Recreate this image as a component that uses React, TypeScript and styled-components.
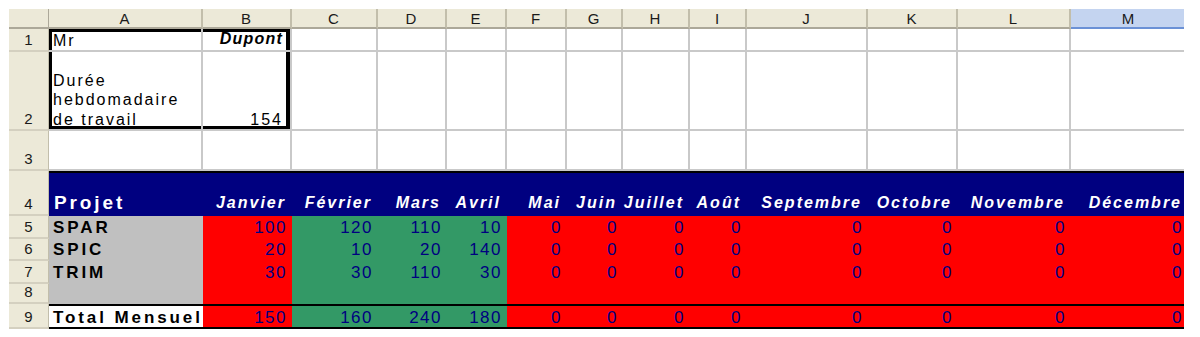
import React from 'react';
import styled, { createGlobalStyle } from 'styled-components';

const GlobalStyle = createGlobalStyle`
    html, body {
        margin: 0;
        padding: 0;
        background: #fff;
    }
    body {
        font-family: "Liberation Sans", Arial, sans-serif;
        color: #000;
    }
`;

// largeurs des colonnes A..M
const COL_WIDTHS = [154, 89, 86, 69, 60, 60, 56, 67, 57, 121, 90, 113, 117];
const COL_NAMES = 'ABCDEFGHIJKLM'.split('');
const SELECTED_COL = 'M';

const MONTHS = [
    'Janvier', 'Février', 'Mars', 'Avril', 'Mai', 'Juin',
    'Juillet', 'Août', 'Septembre', 'Octobre', 'Novembre', 'Décembre'
];

const PROJECTS = [
    { name: 'SPAR', values: [100, 120, 110, 10, 0, 0, 0, 0, 0, 0, 0, 0] },
    { name: 'SPIC', values: [20, 10, 20, 140, 0, 0, 0, 0, 0, 0, 0, 0] },
    { name: 'TRIM', values: [30, 30, 110, 30, 0, 0, 0, 0, 0, 0, 0, 0] },
];

const ROW_HEIGHTS = [23, 22, 23];

// Février à Avril en vert, le reste en rouge
const monthFill = (i: number) => (i >= 1 && i <= 3 ? '#339966' : '#FF0000');

const GRID = '#C9C9C9';

const Sheet = styled.div`
    margin: 9px 0 0 9px;
    width: 1175px;
    overflow: hidden;
    display: flex;
    flex-direction: column;
`;

const Row = styled.div<{ $h: number }>`
    display: flex;
    flex: none;
    height: ${({ $h }) => $h}px;
`;

const Corner = styled.div`
    flex: none;
    width: 40px;
    box-sizing: border-box;
    background: #ECE9D8;
    border-right: 1px solid #ACA899;
    border-bottom: 2px solid #ACA899;
`;

const ColHead = styled.div<{ $w: number; $selected?: boolean }>`
    flex: none;
    width: ${({ $w }) => $w}px;
    box-sizing: border-box;
    display: flex;
    align-items: center;
    justify-content: center;
    background: ${({ $selected }) => ($selected ? '#C4D4F0' : '#ECE9D8')};
    border-right: 2px solid ${({ $selected }) => ($selected ? '#C4D4F0' : '#C2BEAB')};
    border-bottom: 2px solid ${({ $selected }) => ($selected ? '#6B91D6' : '#ACA899')};
    font-size: 15px;
    letter-spacing: 1px;
    color: #1a1a1a;
    padding-top: 1px;
`;

const RowHead = styled.div`
    flex: none;
    width: 40px;
    box-sizing: border-box;
    display: flex;
    align-items: flex-end;
    justify-content: center;
    background: #ECE9D8;
    border-right: 1px solid #C2BEAB;
    border-bottom: 2px solid #D4D0C0;
    font-size: 15px;
    color: #1a1a1a;
    padding-bottom: 2px;
`;

const Cells = styled.div<{ $top?: boolean; $bottom?: boolean }>`
    flex: none;
    display: flex;
    box-sizing: border-box;
    border-top: ${({ $top }) => ($top ? '2px solid #000' : 'none')};
    border-bottom: ${({ $bottom }) => ($bottom ? '2px solid #000' : 'none')};
`;

type Frame = { t?: boolean; r?: boolean; b?: boolean; l?: boolean };

const frameShadow = (f?: Frame) => {
    if (!f) return 'none';
    const parts: string[] = [];
    if (f.t) parts.push('inset 0 3px 0 #000');
    if (f.b) parts.push('inset 0 -3px 0 #000');
    if (f.l) parts.push('inset 3px 0 0 #000');
    if (f.r) parts.push('inset -4px 0 0 #000');
    return parts.join(', ');
};

// cellule vide / texte sur fond blanc avec le quadrillage
const GridCell = styled.div<{ $w: number; $align?: 'left' | 'right'; $frame?: Frame }>`
    flex: none;
    width: ${({ $w }) => $w}px;
    box-sizing: border-box;
    display: flex;
    align-items: flex-end;
    justify-content: ${({ $align }) => ($align === 'right' ? 'flex-end' : 'flex-start')};
    border-right: 2px solid ${GRID};
    border-bottom: 2px solid ${GRID};
    box-shadow: ${({ $frame }) => frameShadow($frame)};
    padding: 0 7px 0 4px;
    font-size: 16px;
    letter-spacing: 2px;
    line-height: 19.5px;
`;

const NameText = styled.span`
    font-weight: 700;
    font-style: italic;
    letter-spacing: 1.2px;
    line-height: 18px;
    padding-bottom: 2px;
`;

const Fill = styled.div<{ $w: number; $bg: string; $align?: 'left' | 'right' }>`
    flex: none;
    width: ${({ $w }) => $w}px;
    box-sizing: border-box;
    display: flex;
    align-items: flex-end;
    justify-content: ${({ $align }) => ($align === 'left' ? 'flex-start' : 'flex-end')};
    background: ${({ $bg }) => $bg};
    white-space: nowrap;
    overflow: hidden;
`;

const ProjectTitle = styled.span`
    color: #fff;
    font-size: 19px;
    font-weight: 700;
    letter-spacing: 2.9px;
    line-height: 19px;
    padding: 0 0 4px 5px;
`;

const MonthTitle = styled.span`
    color: #fff;
    font-size: 16px;
    font-weight: 700;
    font-style: italic;
    letter-spacing: 2px;
    line-height: 16px;
    padding: 0 6px 5px 0;
`;

const Label = styled.span`
    font-size: 17px;
    font-weight: 700;
    letter-spacing: 2.9px;
    line-height: 17px;
    padding: 0 0 3px 4px;
`;

const Value = styled.span`
    color: #000080;
    font-size: 17px;
    letter-spacing: 1.5px;
    line-height: 17px;
    padding: 0 5px 3px 0;
`;

const App: React.FC = () => {
    const totals = MONTHS.map((_, i) => PROJECTS.reduce((s, p) => s + p.values[i], 0));
    const blank = (from: number) =>
        COL_WIDTHS.slice(from).map((w, i) => <GridCell key={from + i} $w={w} />);

    return (
        <>
            <GlobalStyle />
            <Sheet>
                {/* en-têtes de colonnes */}
                <Row $h={20}>
                    <Corner />
                    {COL_NAMES.map((c, i) => (
                        <ColHead key={c} $w={COL_WIDTHS[i]} $selected={c === SELECTED_COL}>
                            {c}
                        </ColHead>
                    ))}
                </Row>

                <Row $h={23}>
                    <RowHead>1</RowHead>
                    <Cells>
                        <GridCell $w={COL_WIDTHS[0]} $frame={{ t: true, l: true }}>Mr</GridCell>
                        <GridCell $w={COL_WIDTHS[1]} $align="right" $frame={{ t: true, r: true }}>
                            <NameText>Dupont</NameText>
                        </GridCell>
                        {blank(2)}
                    </Cells>
                </Row>

                <Row $h={79}>
                    <RowHead>2</RowHead>
                    <Cells>
                        <GridCell $w={COL_WIDTHS[0]} $frame={{ b: true, l: true }}>
                            Durée hebdomadaire de travail
                        </GridCell>
                        <GridCell $w={COL_WIDTHS[1]} $align="right" $frame={{ b: true, r: true }}>
                            154
                        </GridCell>
                        {blank(2)}
                    </Cells>
                </Row>

                <Row $h={40}>
                    <RowHead>3</RowHead>
                    <Cells>{blank(0)}</Cells>
                </Row>

                <Row $h={45}>
                    <RowHead>4</RowHead>
                    <Cells $top>
                        <Fill $w={COL_WIDTHS[0]} $bg="#000080" $align="left">
                            <ProjectTitle>Projet</ProjectTitle>
                        </Fill>
                        {MONTHS.map((m, i) => (
                            <Fill key={m} $w={COL_WIDTHS[i + 1]} $bg="#000080">
                                <MonthTitle>{m}</MonthTitle>
                            </Fill>
                        ))}
                    </Cells>
                </Row>

                {PROJECTS.map((p, r) => (
                    <Row key={p.name} $h={ROW_HEIGHTS[r]}>
                        <RowHead>{r + 5}</RowHead>
                        <Cells>
                            <Fill $w={COL_WIDTHS[0]} $bg="#C0C0C0" $align="left">
                                <Label>{p.name}</Label>
                            </Fill>
                            {p.values.map((v, i) => (
                                <Fill key={i} $w={COL_WIDTHS[i + 1]} $bg={monthFill(i)}>
                                    <Value>{v}</Value>
                                </Fill>
                            ))}
                        </Cells>
                    </Row>
                ))}

                <Row $h={20}>
                    <RowHead>8</RowHead>
                    <Cells>
                        <Fill $w={COL_WIDTHS[0]} $bg="#C0C0C0" />
                        {MONTHS.map((m, i) => (
                            <Fill key={m} $w={COL_WIDTHS[i + 1]} $bg={monthFill(i)} />
                        ))}
                    </Cells>
                </Row>

                <Row $h={25}>
                    <RowHead>9</RowHead>
                    <Cells $top $bottom>
                        <Fill $w={COL_WIDTHS[0]} $bg="#fff" $align="left">
                            <Label style={{ paddingBottom: 1 }}>Total Mensuel</Label>
                        </Fill>
                        {totals.map((v, i) => (
                            <Fill key={i} $w={COL_WIDTHS[i + 1]} $bg={monthFill(i)}>
                                <Value style={{ paddingBottom: 1 }}>{v}</Value>
                            </Fill>
                        ))}
                    </Cells>
                </Row>
            </Sheet>
        </>
    );
};

export default App;
